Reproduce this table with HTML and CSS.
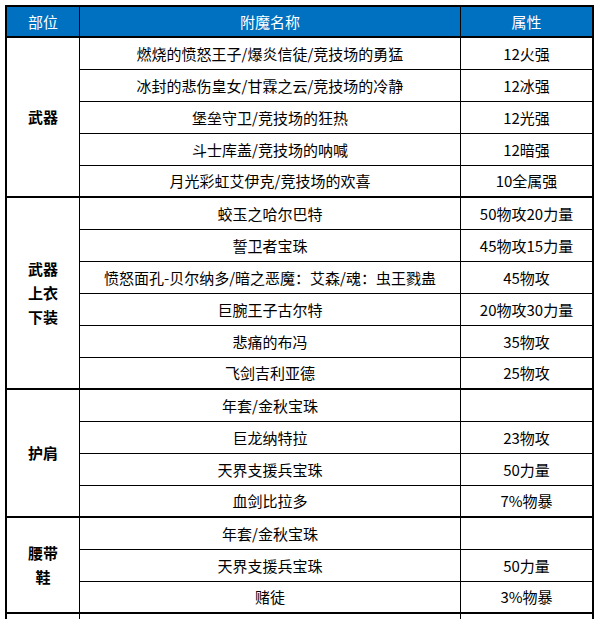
FILE: index.html
```html
<!DOCTYPE html>
<html lang="zh-CN">
<head>
<meta charset="utf-8">
<link rel="stylesheet" href="styles.css">
</head>
<body>
<div class="sheet">
  <div class="hd">部位</div><div class="hd">附魔名称</div><div class="hd last">属性</div>

  <div class="part span5">武器</div>
  <div class="c">燃烧的愤怒王子/爆炎信徒/竞技场的勇猛</div><div class="c last">12火强</div>
  <div class="c">冰封的悲伤皇女/甘霖之云/竞技场的冷静</div><div class="c last">12冰强</div>
  <div class="c">堡垒守卫/竞技场的狂热</div><div class="c last">12光强</div>
  <div class="c">斗士库盖/竞技场的呐喊</div><div class="c last">12暗强</div>
  <div class="c end">月光彩虹艾伊克/竞技场的欢喜</div><div class="c last end">10全属强</div>

  <div class="part span6">武器<br>上衣<br>下装</div>
  <div class="c">蛟玉之哈尔巴特</div><div class="c last">50物攻20力量</div>
  <div class="c">誓卫者宝珠</div><div class="c last">45物攻15力量</div>
  <div class="c">愤怒面孔-贝尔纳多/暗之恶魔：艾森/魂：虫王戮蛊</div><div class="c last">45物攻</div>
  <div class="c">巨腕王子古尔特</div><div class="c last">20物攻30力量</div>
  <div class="c">悲痛的布冯</div><div class="c last">35物攻</div>
  <div class="c end">飞剑吉利亚德</div><div class="c last end">25物攻</div>

  <div class="part span4">护肩</div>
  <div class="c">年套/金秋宝珠</div><div class="c last"></div>
  <div class="c">巨龙纳特拉</div><div class="c last">23物攻</div>
  <div class="c">天界支援兵宝珠</div><div class="c last">50力量</div>
  <div class="c end">血剑比拉多</div><div class="c last end">7%物暴</div>

  <div class="part span3">腰带<br>鞋</div>
  <div class="c">年套/金秋宝珠</div><div class="c last"></div>
  <div class="c">天界支援兵宝珠</div><div class="c last">50力量</div>
  <div class="c end">赌徒</div><div class="c last end">3%物暴</div>

  <div class="part span2"></div>
  <div class="c"></div><div class="c last"></div>
  <div class="c"></div><div class="c last"></div>
</div>
</body>
</html>
```
FILE: styles.css
```css
html, body {
  margin: 0;
  padding: 0;
  background: #fff;
  overflow: hidden;
}
body {
  padding: 5px 0 0 5px;
  font-family: "Noto Sans CJK SC", "Microsoft YaHei", sans-serif;
  font-size: 15px;
  color: #000;
}
.sheet {
  width: 585px;
  display: grid;
  grid-template-columns: 73px 381px 131px;
  grid-template-rows: 31px;
  grid-auto-rows: 32px;
  border: 2px solid #000;
  border-bottom: none;
}
.sheet > div {
  box-sizing: border-box;
  border-right: 1px solid #000;
  border-bottom: 1px solid #000;
  display: flex;
  align-items: center;
  justify-content: center;
  text-align: center;
  white-space: nowrap;
}
.sheet > .last {
  border-right: none;
}
.hd {
  background: #0070c0;
  color: #fff;
  border-bottom: 2px solid #000 !important;
  padding-bottom: 1px;
}
.c {
  padding-bottom: 1px;
}
.sheet > .end {
  border-bottom: 2px solid #000;
}
.part {
  font-weight: bold;
  line-height: 24px;
  border-bottom: 2px solid #000 !important;
}
.span5 { grid-row: span 5; }
.span6 { grid-row: span 6; }
.span4 { grid-row: span 4; }
.span3 { grid-row: span 3; }
.span2 { grid-row: span 2; }
```
